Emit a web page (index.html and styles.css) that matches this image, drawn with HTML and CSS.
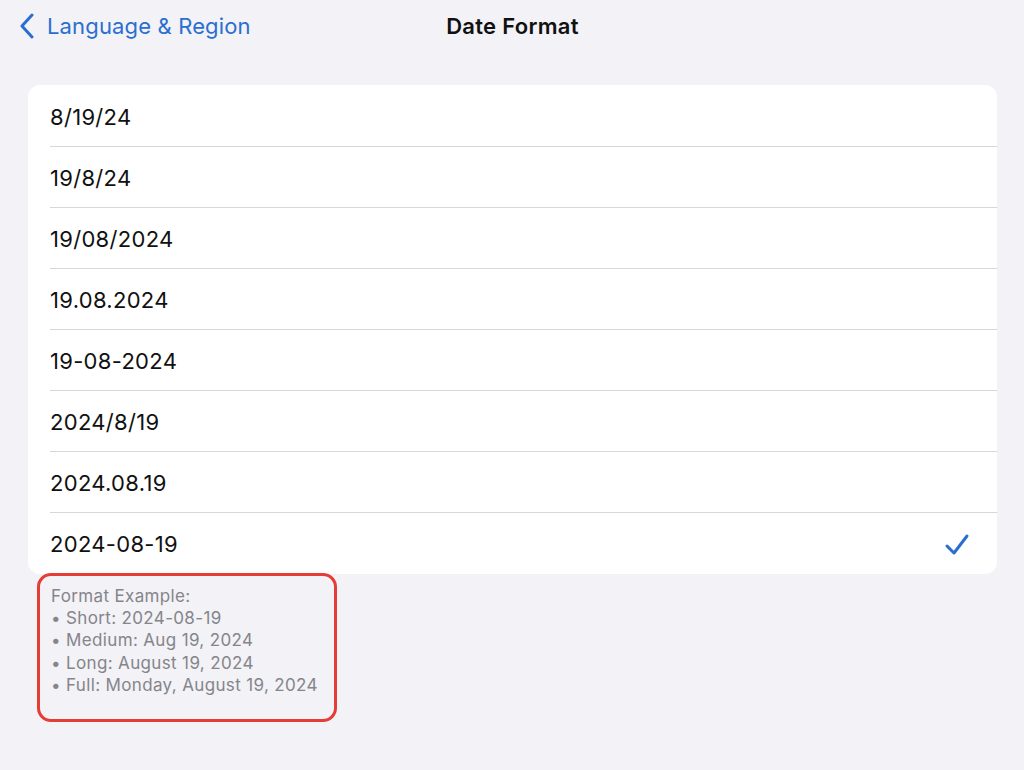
FILE: index.html
```html
<!DOCTYPE html>
<html>
<head>
<meta charset="utf-8">
<link rel="stylesheet" href="styles.css">
</head>
<body>
<div class="page">
  <header class="nav">
    <div class="back">
      <svg class="chev" width="16" height="26" viewBox="0 0 16 26"><path d="M13 2 L3 13 L13 24" fill="none" stroke="#2a6fd0" stroke-width="3" stroke-linecap="round" stroke-linejoin="round"/></svg>
      <span class="back-label">Language &amp; Region</span>
    </div>
    <div class="title">Date Format</div>
  </header>
  <ul class="card">
    <li class="row"><span>8/19/24</span></li>
    <li class="row"><span>19/8/24</span></li>
    <li class="row"><span>19/08/2024</span></li>
    <li class="row"><span>19.08.2024</span></li>
    <li class="row"><span>19-08-2024</span></li>
    <li class="row"><span>2024/8/19</span></li>
    <li class="row"><span>2024.08.19</span></li>
    <li class="row"><span>2024-08-19</span>
      <svg class="check" width="26" height="24" viewBox="0 0 26 24"><path d="M3 13 L10 20 L23 3" fill="none" stroke="#2a6fd0" stroke-width="3" stroke-linecap="round" stroke-linejoin="round"/></svg>
    </li>
  </ul>
  <div class="note">
    <div>Format Example:</div>
    <div>• Short: 2024-08-19</div>
    <div>• Medium: Aug 19, 2024</div>
    <div>• Long: August 19, 2024</div>
    <div>• Full: Monday, August 19, 2024</div>
  </div>
</div>
</body>
</html>
```
FILE: styles.css
```css
* { box-sizing: border-box; }
html, body { margin: 0; padding: 0; }
body {
  background: #f2f2f7;
  font-family: Inter, "Noto Sans", "Liberation Sans", sans-serif;
  width: 1024px;
  height: 770px;
  overflow: hidden;
}
.page { padding: 0 27px 0 28px; }
.nav {
  position: relative;
  height: 85px;
  margin: 0 -28px;
}
.back {
  display: flex;
  align-items: center;
  gap: 12px;
  padding: 12px 0 0 19px;
  height: 40px;
}
.chev { display: block; }
.back-label {
  color: #2a6fd0;
  font-size: 22px;
  letter-spacing: 0.15px;
}
.title {
  position: absolute;
  left: 0; right: 0; top: 13px;
  text-align: center;
  font-size: 22px;
  font-weight: 600;
  color: #111;
  letter-spacing: 0.3px;
}
.card {
  list-style: none;
  margin: 0;
  padding: 1px 0 0 22px;
  background: #fff;
  border-radius: 12px;
  overflow: hidden;
}
.row {
  height: 61px;
  display: flex;
  align-items: center;
  justify-content: space-between;
  padding-right: 27px;
  font-size: 22px;
  letter-spacing: 0.3px;
  color: #111;
  border-bottom: 1px solid #d7d7da;
  padding-top: 1px;
}
.row:last-child { border-bottom: none; }
.check { display: block; margin-top: 2px; }
.note {
  margin: -1px 0 0 9px;
  width: 300px;
  height: 149px;
  border: 3px solid #e63c36;
  border-radius: 14px;
  padding: 9px 0 0 11px;
  color: #85858a;
  font-size: 17px;
  letter-spacing: 0.35px;
  line-height: 22.2px;
}
```
